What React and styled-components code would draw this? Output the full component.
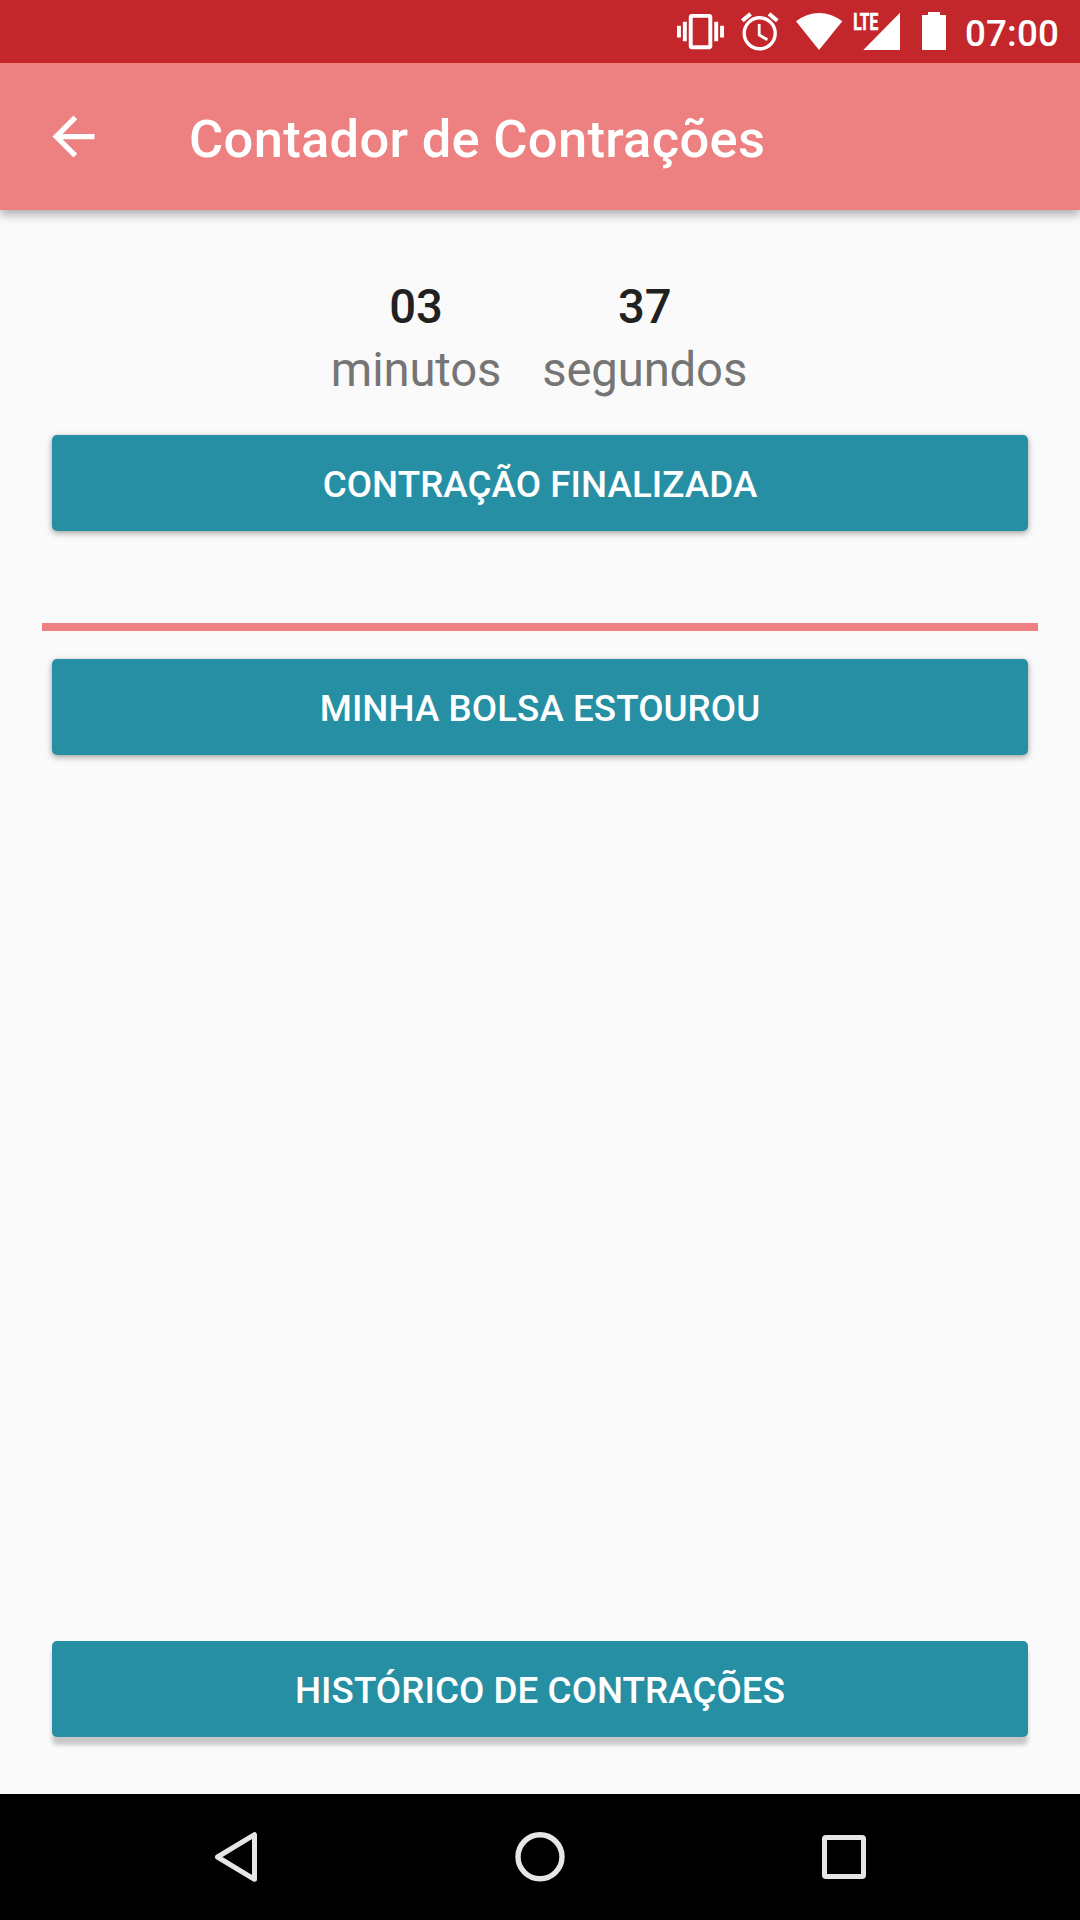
import React from 'react';
import styled, { createGlobalStyle } from 'styled-components';

const GlobalStyle = createGlobalStyle`
  * { box-sizing: border-box; }
  body { margin: 0; background: #fafafa; }
`;

const Screen = styled.div`
  width: 1080px;
  height: 1920px;
  display: flex;
  flex-direction: column;
  overflow: hidden;
  background: #fafafa;
  font-family: Roboto, 'Liberation Sans', sans-serif;
`;

const StatusBar = styled.header`
  position: relative;
  z-index: 1;
  height: 63px;
  flex: none;
  display: flex;
  justify-content: flex-end;
  padding-right: 21px;
  background: #c3272b;
  color: #fff;
`;

const StatusIcons = styled.svg`
  width: 290px;
  height: 63px;
  flex: none;
  fill: #fff;
`;

const NetworkLabel = styled.text`
  font-size: 23px;
  font-weight: 700;
  stroke: #fff;
  stroke-width: 0.7;
`;

const Clock = styled.time`
  width: 94px;
  text-align: right;
  font-size: 36.75px;
  font-weight: 500;
  line-height: 63px;
  padding-top: 2px;
  letter-spacing: 0.15px;
  white-space: nowrap;
`;

const Toolbar = styled.div`
  height: 147px;
  flex: none;
  display: flex;
  align-items: center;
  gap: 84px;
  padding-left: 42px;
  background: #ed8080;
  box-shadow: 0 4px 10px rgba(0, 0, 0, 0.34);
  color: #fff;
`;

const BackButton = styled.button`
  width: 63px;
  height: 63px;
  padding: 0;
  border: 0;
  background: none;

  svg {
    display: block;
    width: 63px;
    height: 63px;
    fill: #fff;
  }
`;

const Title = styled.h1`
  margin: 0;
  padding-top: 5px;
  font-size: 52.5px;
  font-weight: 500;
  line-height: 62px;
  letter-spacing: 0.29px;
`;

const Content = styled.main`
  flex: 1;
  display: flex;
  flex-direction: column;
  padding: 66px 42px 57px;
`;

const Timer = styled.section`
  display: flex;
  justify-content: center;
  gap: 41px;
  margin-bottom: 33px;
  padding-right: 2px;
`;

const TimeUnit = styled.div`
  display: flex;
  flex-direction: column;
  align-items: center;
  font-size: 47.25px;
  line-height: 63px;
  letter-spacing: -0.15px;
`;

const Amount = styled.span`
  font-weight: 500;
  color: #212121;
`;

const UnitName = styled.span`
  color: #757575;
`;

const ActionButton = styled.button`
  height: 96px;
  flex: none;
  margin: 0 10px;
  padding: 3px 0 0;
  border: 0;
  border-radius: 5px;
  background: #268fa3;
  box-shadow: ${({ $raised }) =>
    $raised ? '0 8px 4px rgba(0, 0, 0, 0.2)' : '0 2px 6px rgba(0, 0, 0, 0.38)'};
  color: #fff;
  font-family: inherit;
  font-size: 36.75px;
  font-weight: 500;
  letter-spacing: 0.06px;
  text-transform: uppercase;
`;

const Divider = styled.hr`
  width: 100%;
  height: 8px;
  flex: none;
  margin: 92px 0 28px;
  border: 0;
  background: #ed8080;
`;

const Spacer = styled.div`
  flex: 1;
`;

const NavBar = styled.nav`
  height: 126px;
  flex: none;
  display: flex;
  justify-content: center;
  align-items: center;
  gap: 240px;
  background: #000;
`;

const NavIcon = styled.svg`
  width: 64px;
  height: 64px;
  fill: none;
  stroke: #e6e6e6;
  stroke-width: 5;
  stroke-linejoin: round;
`;

export default function App() {
  return (
    <Screen>
      <GlobalStyle />
      <StatusBar>
        <StatusIcons viewBox="675 0 290 63">
          <path
            transform="translate(677 8) scale(1.96)"
            d="M0 15h2V9H0v6zm3 2h2V7H3v10zm19-8v6h2V9h-2zm-3 8h2V7h-2v10zM16.5 3h-9C6.67 3 6 3.67 6 4.5v15c0 .83.67 1.5 1.5 1.5h9c.83 0 1.5-.67 1.5-1.5v-15c0-.83-.67-1.5-1.5-1.5zM16 19H8V5h8v14z"
          />
          <g fill="none" stroke="#fff" strokeWidth="3.4">
            <circle cx="759.7" cy="33.3" r="15.5" />
            <path d="M759.2 24v11l8.2 4.8" strokeWidth="2.8" />
            <path d="M742.3 20.8l8.3-6.9M777.3 20.8l-8.3-6.9" strokeWidth="4" />
          </g>
          <path d="M796 21.3A36.5 36.5 0 0 1 842.3 21.3L819 50z" />
          <path d="M863.3 50H900V12.7z" />
          <NetworkLabel x="853.2" y="30" textLength="25" lengthAdjust="spacingAndGlyphs">
            LTE
          </NetworkLabel>
          <path d="M922 15h6v-3h12v3h6v35h-24z" />
        </StatusIcons>
        <Clock>07:00</Clock>
      </StatusBar>
      <Toolbar>
        <BackButton aria-label="Voltar">
          <svg viewBox="0 0 24 24">
            <path d="M20 11H7.83l5.59-5.59L12 4l-8 8 8 8 1.41-1.41L7.83 13H20v-2z" />
          </svg>
        </BackButton>
        <Title>Contador de Contrações</Title>
      </Toolbar>
      <Content>
        <Timer>
          <TimeUnit>
            <Amount>03</Amount>
            <UnitName>minutos</UnitName>
          </TimeUnit>
          <TimeUnit>
            <Amount>37</Amount>
            <UnitName>segundos</UnitName>
          </TimeUnit>
        </Timer>
        <ActionButton>Contração finalizada</ActionButton>
        <Divider />
        <ActionButton>Minha bolsa estourou</ActionButton>
        <Spacer />
        <ActionButton $raised>Histórico de contrações</ActionButton>
      </Content>
      <NavBar>
        <NavIcon viewBox="0 0 64 64">
          <path d="M50.5 9.7v44.6L13.5 32z" />
        </NavIcon>
        <NavIcon viewBox="0 0 64 64">
          <circle cx="32" cy="31.8" r="22" strokeWidth="5.4" />
        </NavIcon>
        <NavIcon viewBox="0 0 64 64">
          <rect x="12.5" y="12.5" width="39" height="39" rx="1.5" />
        </NavIcon>
      </NavBar>
    </Screen>
  );
}
